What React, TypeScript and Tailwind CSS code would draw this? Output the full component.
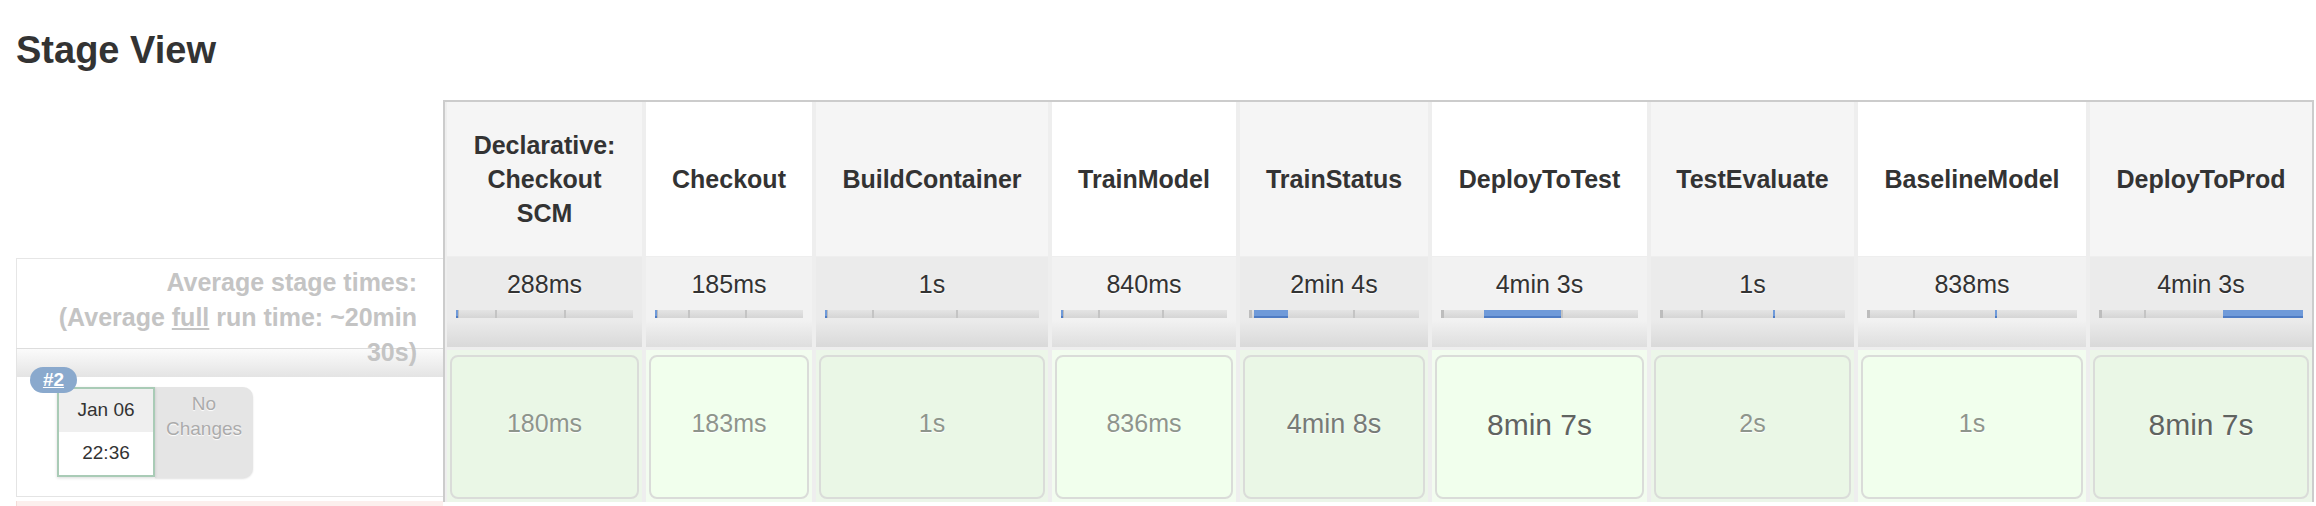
import React from "react";

type Stage = {
  name: string;
  w: string;
  avg: string;
  fill: [number, number];
  run: string;
  tone: 0 | 1 | 2;
};

const stages: Stage[] = [
  { name: "Declarative: Checkout SCM", w: "w-[195px]", avg: "288ms", fill: [0, 1], run: "180ms", tone: 0 },
  { name: "Checkout", w: "w-[166px]", avg: "185ms", fill: [0, 1], run: "183ms", tone: 0 },
  { name: "BuildContainer", w: "w-[232px]", avg: "1s", fill: [0, 1], run: "1s", tone: 0 },
  { name: "TrainModel", w: "w-[184px]", avg: "840ms", fill: [0, 1], run: "836ms", tone: 0 },
  { name: "TrainStatus", w: "w-[188px]", avg: "2min 4s", fill: [3, 23], run: "4min 8s", tone: 1 },
  { name: "DeployToTest", w: "w-[215px]", avg: "4min 3s", fill: [22, 61], run: "8min 7s", tone: 2 },
  { name: "TestEvaluate", w: "w-[203px]", avg: "1s", fill: [61, 62], run: "2s", tone: 0 },
  { name: "BaselineModel", w: "w-[228px]", avg: "838ms", fill: [61, 62], run: "1s", tone: 0 },
  { name: "DeployToProd", w: "w-[222px]", avg: "4min 3s", fill: [61, 100], run: "8min 7s", tone: 2 },
];

const toneClass = {
  0: "text-[25px] text-[#8e958c]",
  1: "text-[27px] text-[#777b77]",
  2: "text-[30px] text-[#606460]",
};

const TimeBar = ({ fill }: { fill: [number, number] }) => {
  const [from, to] = fill;
  return (
    <div className="relative mx-[9px] mt-[11px] h-[8px] bg-[linear-gradient(#e4e4e4,#d5d5d5)]">
      <div className="absolute left-0 top-0 h-full w-[3px] bg-[#bdbdbd]" />
      <div className="absolute left-[22%] top-0 h-full w-[2px] bg-[#c4c4c4]" />
      <div className="absolute left-[61%] top-0 h-full w-[2px] bg-[#c4c4c4]" />
      <div
        className="absolute top-0 h-full min-w-[2px] border-b-2 border-[#4f7cc4] bg-[#6f9ad9]"
        style={{ left: `${from}%`, width: `${to - from}%` }}
      />
    </div>
  );
};

const StageColumn = ({ stage, index }: { stage: Stage; index: number }) => {
  const even = index % 2 === 0;
  return (
    <div className={`flex shrink-0 flex-col ${stage.w}`}>
      <div
        className={`flex h-[154px] items-center justify-center px-[12px] text-center text-[25px] font-bold leading-[34px] text-[#333333] ${
          even ? "bg-[#f5f5f5]" : "bg-white"
        }`}
      >
        {stage.name}
      </div>
      <div
        className={`mt-[1px] h-[90px] pt-[12px] ${
          even
            ? "bg-[linear-gradient(#ebebeb_70%,#d9d9d9)]"
            : "bg-[linear-gradient(#f2f2f2_70%,#dedede)]"
        }`}
      >
        <div className="text-center text-[25px] leading-[30px] text-[#333333] [text-shadow:0_1px_1px_#ffffff]">
          {stage.avg}
        </div>
        <TimeBar fill={stage.fill} />
      </div>
      <div
        className={`mt-[3px] h-[152px] px-[3px] pt-[5px] ${
          even ? "bg-[#ecf6e9]" : "bg-[#f2fcef]"
        }`}
      >
        <div
          className={`flex h-[144px] items-center justify-center rounded-[8px] border-2 border-[#dadcd9] pb-[6px] ${
            even ? "bg-[#eaf7e6]" : "bg-[#f1ffed]"
          }`}
        >
          <span className={`${toneClass[stage.tone]} [text-shadow:0_1px_1px_#ffffff]`}>
            {stage.run}
          </span>
        </div>
      </div>
    </div>
  );
};

const BuildRow = () => (
  <div className="h-[149px] border-b border-l border-t border-b-[#e4e4e4] border-l-[#e4e4e4] border-t-[#dddddd]">
    <div className="h-[28px] bg-[linear-gradient(#fbfbfb,#e4e4e4)]" />
    <div className="flex pl-[40px] pt-[10px]">
      <div className="relative flex">
        <div className="absolute left-[-27px] top-[-20px] z-20 h-[26px] w-[47px] rounded-full bg-[#8aa9cd] text-center text-[19px] font-bold leading-[26px] text-white underline">
          #2
        </div>
        <div className="relative z-10 flex h-[90px] w-[98px] flex-col border-2 border-[#a9cbb6] bg-white shadow-[0_1px_3px_rgba(0,0,0,0.15)]">
          <div className="flex h-[43px] items-center justify-center bg-[#efefef] text-[19px] text-[#333333]">
            Jan 06
          </div>
          <div className="flex h-[43px] items-center justify-center text-[19px] text-[#333333]">
            22:36
          </div>
        </div>
        <div className="h-[91px] w-[98px] rounded-r-[10px] bg-[#e5e5e5] pt-[4px] text-center text-[19px] leading-[25px] text-[#ababab] shadow-[0_1px_2px_rgba(0,0,0,0.12)] [text-shadow:0_1px_1px_#ffffff]">
          No
          <br />
          Changes
        </div>
      </div>
    </div>
  </div>
);

export default function App() {
  return (
    <div className="h-[506px] w-full overflow-hidden bg-white pl-[16px] pt-[31px] font-['Liberation_Sans',Arial,sans-serif]">
      <h2 className="text-[38px] font-bold leading-[38px] text-[#333333]">Stage View</h2>

      <div className="mt-[31px] flex items-start">
        <div className="mt-[158px] w-[427px] shrink-0">
          <div className="h-[90px] border-l border-t border-[#e6e6e6] pr-[26px] pt-[6px]">
            <div className="relative z-30 text-right text-[25px] font-bold leading-[35px] text-[#c4c4c4]">
              Average stage times:
              <br />
              (Average <span className="underline">full</span> run time: ~20min 30s)
            </div>
          </div>
          <BuildRow />
          <div className="mt-[4px] h-[10px] border-l border-[#f3dcd8] bg-[#fcefed]" />
        </div>

        <div className="flex w-[1871px] shrink-0 gap-[4px] border-l-2 border-r-2 border-t-2 border-[#cccccc] bg-[#eeeeee] pl-[2px]">
          {stages.map((stage, i) => (
            <StageColumn key={stage.name} stage={stage} index={i} />
          ))}
        </div>
      </div>
    </div>
  );
}
